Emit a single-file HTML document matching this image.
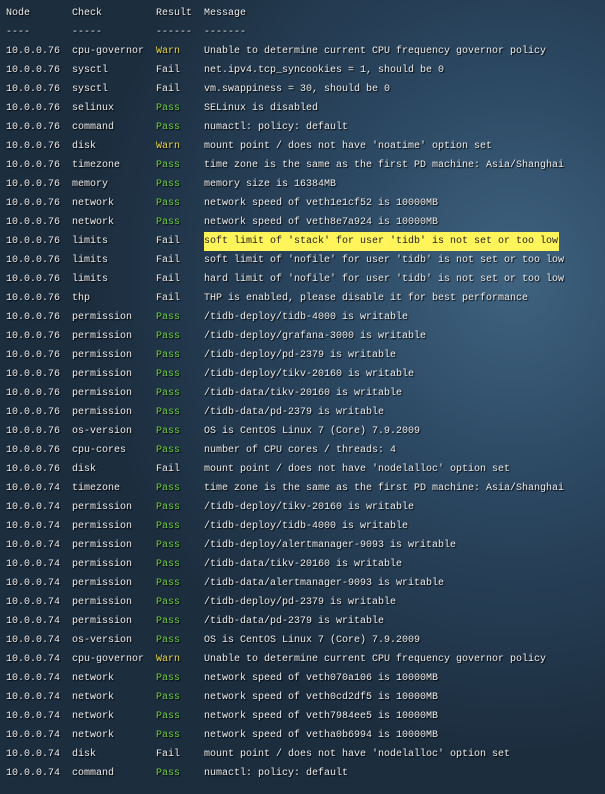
<!DOCTYPE html>
<html><head><meta charset="utf-8"><style>
html,body{margin:0;padding:0}
body{width:605px;height:794px;overflow:hidden;background:radial-gradient(ellipse 70% 60% at 85% 35%,#3f6380 0%,#2b4761 45%,#1c2d3e 100%);font-family:"Liberation Mono",monospace;font-size:10px;color:#ececec;text-shadow:1px 1px 1px #000}
.r{position:absolute;left:0;height:19px;line-height:19px;white-space:pre}
.r span{position:absolute;top:0}
.a{left:6px}.b{left:72px}.c{left:156px}.d{left:204px}
.W{color:#e8d84a}.P{color:#6fcf3f}.F{color:#ececec}
.hl{background:#fff55a;color:#222;text-shadow:none;padding-right:1px}
</style></head><body>
<div id="t"></div>
<script>
const rows=[["Node","Check","Result","Message"],["----","-----","------","-------"],
["10.0.0.76","cpu-governor","Warn","Unable to determine current CPU frequency governor policy"],
["10.0.0.76","sysctl","Fail","net.ipv4.tcp_syncookies = 1, should be 0"],
["10.0.0.76","sysctl","Fail","vm.swappiness = 30, should be 0"],
["10.0.0.76","selinux","Pass","SELinux is disabled"],
["10.0.0.76","command","Pass","numactl: policy: default"],
["10.0.0.76","disk","Warn","mount point / does not have 'noatime' option set"],
["10.0.0.76","timezone","Pass","time zone is the same as the first PD machine: Asia/Shanghai"],
["10.0.0.76","memory","Pass","memory size is 16384MB"],
["10.0.0.76","network","Pass","network speed of veth1e1cf52 is 10000MB"],
["10.0.0.76","network","Pass","network speed of veth8e7a924 is 10000MB"],
["10.0.0.76","limits","Fail","soft limit of 'stack' for user 'tidb' is not set or too low","hl"],
["10.0.0.76","limits","Fail","soft limit of 'nofile' for user 'tidb' is not set or too low"],
["10.0.0.76","limits","Fail","hard limit of 'nofile' for user 'tidb' is not set or too low"],
["10.0.0.76","thp","Fail","THP is enabled, please disable it for best performance"],
["10.0.0.76","permission","Pass","/tidb-deploy/tidb-4000 is writable"],
["10.0.0.76","permission","Pass","/tidb-deploy/grafana-3000 is writable"],
["10.0.0.76","permission","Pass","/tidb-deploy/pd-2379 is writable"],
["10.0.0.76","permission","Pass","/tidb-deploy/tikv-20160 is writable"],
["10.0.0.76","permission","Pass","/tidb-data/tikv-20160 is writable"],
["10.0.0.76","permission","Pass","/tidb-data/pd-2379 is writable"],
["10.0.0.76","os-version","Pass","OS is CentOS Linux 7 (Core) 7.9.2009"],
["10.0.0.76","cpu-cores","Pass","number of CPU cores / threads: 4"],
["10.0.0.76","disk","Fail","mount point / does not have 'nodelalloc' option set"],
["10.0.0.74","timezone","Pass","time zone is the same as the first PD machine: Asia/Shanghai"],
["10.0.0.74","permission","Pass","/tidb-deploy/tikv-20160 is writable"],
["10.0.0.74","permission","Pass","/tidb-deploy/tidb-4000 is writable"],
["10.0.0.74","permission","Pass","/tidb-deploy/alertmanager-9093 is writable"],
["10.0.0.74","permission","Pass","/tidb-data/tikv-20160 is writable"],
["10.0.0.74","permission","Pass","/tidb-data/alertmanager-9093 is writable"],
["10.0.0.74","permission","Pass","/tidb-deploy/pd-2379 is writable"],
["10.0.0.74","permission","Pass","/tidb-data/pd-2379 is writable"],
["10.0.0.74","os-version","Pass","OS is CentOS Linux 7 (Core) 7.9.2009"],
["10.0.0.74","cpu-governor","Warn","Unable to determine current CPU frequency governor policy"],
["10.0.0.74","network","Pass","network speed of veth070a106 is 10000MB"],
["10.0.0.74","network","Pass","network speed of veth0cd2df5 is 10000MB"],
["10.0.0.74","network","Pass","network speed of veth7984ee5 is 10000MB"],
["10.0.0.74","network","Pass","network speed of vetha0b6994 is 10000MB"],
["10.0.0.74","disk","Fail","mount point / does not have 'nodelalloc' option set"],
["10.0.0.74","command","Pass","numactl: policy: default"]];
let h="";
rows.forEach((r,i)=>{const y=4+i*19;const cls=(i>1)?r[2][0]:"";
h+=`<div class="r" style="top:${y}px"><span class="a">${r[0]}</span><span class="b">${r[1]}</span><span class="c ${cls}">${r[2]}</span><span class="d ${r[4]||''}">${r[3]}</span></div>`;});
document.getElementById("t").innerHTML=h;
</script>
</body></html>
